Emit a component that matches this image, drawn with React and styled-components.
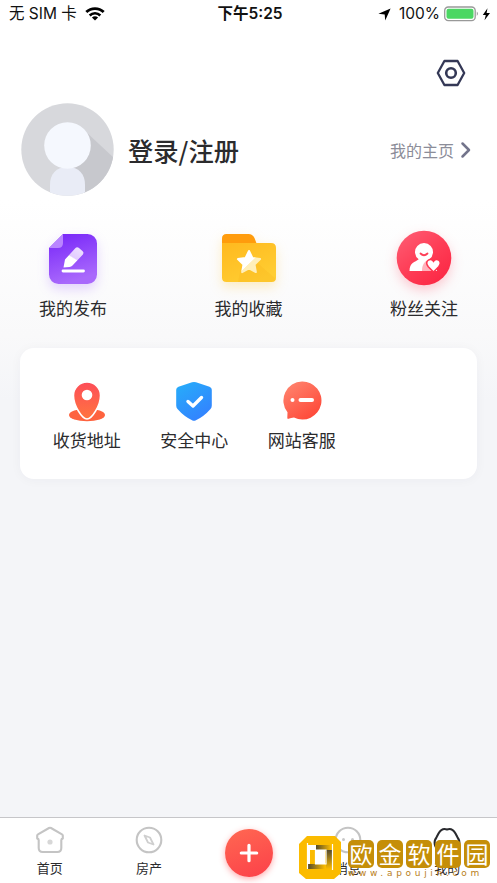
import styled, { createGlobalStyle } from "styled-components";

const shortcuts = [
  { label: "我的发布", icon: <PublishIcon /> },
  { label: "我的收藏", icon: <FavoriteIcon /> },
  { label: "粉丝关注", icon: <FansIcon /> },
];

const services = [
  { label: "收货地址", icon: <AddressIcon /> },
  { label: "安全中心", icon: <ShieldIcon /> },
  { label: "网站客服", icon: <SupportIcon /> },
];

export default function App() {
  return (
    <Page>
      <GlobalStyle />
      <StatusBar>
        <div className="left">
          <span>无 SIM 卡</span>
          <WifiIcon />
        </div>
        <div className="time">下午5:25</div>
        <div className="right">
          <LocationIcon />
          <span className="percent">100%</span>
          <BatteryIcon />
        </div>
      </StatusBar>
      <Toolbar>
        <SettingsIcon />
      </Toolbar>
      <Profile>
        <Avatar />
        <h1>登录/注册</h1>
        <HomeLink>
          我的主页
          <svg width="12" height="18" viewBox="0 0 12 18" fill="none">
            <path d="M2.5 2.5 9 9l-6.5 6.5" stroke="#73748b" strokeWidth="2.5" strokeLinecap="round" strokeLinejoin="round" />
          </svg>
        </HomeLink>
      </Profile>
      <Shortcuts>
        {shortcuts.map((item) => (
          <Shortcut key={item.label}>
            {item.icon}
            <span>{item.label}</span>
          </Shortcut>
        ))}
      </Shortcuts>
      <Card>
        {services.map((item) => (
          <Service key={item.label}>
            {item.icon}
            <span>{item.label}</span>
          </Service>
        ))}
      </Card>
      <TabBar>
        <Tab>
          <HomeIcon />
          <span>首页</span>
        </Tab>
        <Tab>
          <CompassIcon />
          <span>房产</span>
        </Tab>
        <Tab>
          <AddButton aria-label="发布">
            <svg width="20" height="20" viewBox="0 0 20 20">
              <path d="M10 2.3v15.4M2.3 10h15.4" stroke="#fff" strokeWidth="3.2" strokeLinecap="round" />
            </svg>
          </AddButton>
        </Tab>
        <Tab>
          <MessageIcon />
          <span>消息</span>
        </Tab>
        <Tab>
          <MineIcon />
          <span>我的</span>
        </Tab>
      </TabBar>
      <Watermark>
        <WatermarkLogo />
        <div>
          <Tiles>
            {["欧", "金", "软", "件", "园"].map((char) => (
              <Tile key={char}>{char}</Tile>
            ))}
          </Tiles>
          <Site>www.apoujin.com</Site>
        </div>
      </Watermark>
    </Page>
  );
}

function WifiIcon() {
  return (
    <svg width="20" height="14" viewBox="0 0 20 14" fill="none" stroke="#000">
      <path d="M1.3 5.1a12.4 12.4 0 0 1 17.4 0" strokeWidth="2.8" />
      <path d="M4.7 8.5a7.5 7.5 0 0 1 10.6 0" strokeWidth="2.6" />
      <path d="M10 13.4 6.9 10.6a4.7 4.7 0 0 1 6.2 0z" fill="#000" stroke="none" />
    </svg>
  );
}

function LocationIcon() {
  return (
    <svg width="13" height="13" viewBox="0 0 13 13">
      <path d="M12.6.4 7.2 12.5 6.7 6.4.4 5.8z" fill="#000" />
    </svg>
  );
}

function BatteryIcon() {
  return (
    <svg width="47" height="16" viewBox="0 0 47 16">
      <rect x=".7" y="1" width="30.5" height="13.6" rx="3.6" fill="#fff" stroke="#999" strokeWidth="1.3" />
      <rect x="2.5" y="2.8" width="27" height="10" rx="2" fill="#4bd763" />
      <path d="M32.8 5.6q2 2.2 0 4.4z" fill="#888" />
      <path d="M43.5 2.2 38.8 9h3l-1.3 5.2L46 7h-3.4z" fill="#000" />
    </svg>
  );
}

function SettingsIcon() {
  return (
    <svg width="30" height="28" viewBox="0 0 30 28" fill="none" stroke="#343856" strokeWidth="2.3" strokeLinejoin="round">
      <path d="M8.4 2h13.2L28.2 14l-6.6 12H8.4L1.8 14z" />
      <circle cx="15" cy="14" r="4.8" strokeWidth="2.6" />
    </svg>
  );
}

function Avatar() {
  return (
    <svg width="93" height="93" viewBox="0 0 93 93">
      <defs>
        <clipPath id="avatar">
          <circle cx="46.5" cy="46.5" r="46.2" />
        </clipPath>
      </defs>
      <g clipPath="url(#avatar)">
        <path d="M0 0h93v93H0z" fill="#d7d8dc" />
        <path d="M63 27 93 55v38H62L50 60z" fill="#c7c8cd" />
        <path d="M29 93V82c0-11 6-18 17.5-18S64 71 64 82v11z" fill="#e9ecf6" />
        <circle cx="46.5" cy="42.5" r="23.3" fill="#f5f8fe" />
      </g>
    </svg>
  );
}

function PublishIcon() {
  return (
    <IconShadow $color="rgba(143, 70, 255, .22)" width="60" height="60" viewBox="0 0 60 60">
      <defs>
        <linearGradient id="publish" x2=".3" y2="1">
          <stop stopColor="#7624f8" />
          <stop offset="1" stopColor="#a969fc" />
        </linearGradient>
        <linearGradient id="pen" x1=".2" y1="1" x2=".8" y2="0">
          <stop offset=".45" stopColor="#fff" />
          <stop offset=".5" stopColor="#e2ccff" />
          <stop offset="1" stopColor="#eee1ff" />
        </linearGradient>
      </defs>
      <path d="M20 5h24.5a9.5 9.5 0 0 1 9.5 9.5v31a9.5 9.5 0 0 1-9.5 9.5h-29A9.500 9.500 0 0 1 6 45.500V19z" fill="url(#publish)" />
      <path d="M20 5v9q0 5-5 5H6z" fill="#b985ff" />
      <path d="M20.500 38.500 22 30.500 32.500 19q1.500-1.500 3.200-.2l4 3.400q1.600 1.500.2 3.200L29.500 36.500q-1.200 1.300-3 1.500z" fill="url(#pen)" />
      <path d="M20 42h20.500" stroke="#fff" strokeWidth="2.800" strokeLinecap="round" />
    </IconShadow>
  );
}

function FavoriteIcon() {
  return (
    <IconShadow $color="rgba(255, 190, 30, .25)" width="60" height="60" viewBox="0 0 60 60">
      <defs>
        <linearGradient id="folder" x2=".6" y2="1">
          <stop stopColor="#ffb91f" />
          <stop offset="1" stopColor="#ffcd31" />
        </linearGradient>
        <linearGradient id="star" x2="1" y2="1">
          <stop offset=".54" stopColor="#fff" />
          <stop offset=".56" stopColor="#ffefba" />
        </linearGradient>
      </defs>
      <path d="M3 20V9.500Q3 5 7.500 5h22q4 0 6 4l3 8v8z" fill="#ff9c0c" />
      <path d="M3 14h49q5 0 5 5v29.500q0 4.500-4.500 4.500h-45Q3 53 3 48.500z" fill="url(#folder)" />
      <path d="m19 53 3-15 12-8 23 20q-1 3-4.500 3z" fill="#f8ad18" opacity=".22" />
      <path d="m30 22 3.400 7 7.700 1.100-5.600 5.400 1.400 7.600-6.900-3.700-6.900 3.700 1.400-7.600-5.600-5.400 7.700-1.100z" fill="url(#star)" stroke="url(#star)" strokeWidth="2" strokeLinejoin="round" />
    </IconShadow>
  );
}

function FansIcon() {
  return (
    <IconShadow $color="rgba(255, 57, 82, .25)" width="60" height="60" viewBox="0 0 60 60">
      <defs>
        <linearGradient id="fans" x1=".1" x2=".9" y2="1">
          <stop stopColor="#fe5c73" />
          <stop offset=".5" stopColor="#fe3d56" />
          <stop offset="1" stopColor="#fb2542" />
        </linearGradient>
      </defs>
      <circle cx="30" cy="29" r="27.300" fill="url(#fans)" />
      <path d="M15.500 42c0-8.500 5.500-8.500 9.200-11.700a9 9 0 1 1 10.600 0c4.700 3.200 7.700 4.700 7.700 11.700z" fill="#fff" />
      <path d="M32.500 31.500c-3.500 3-4.500 6-4.500 10.500h14z" fill="#ffb3bc" />
      <path d="M26.500 24.500q3.500 3.500 7 0" fill="none" stroke="#fe4058" strokeWidth="1.800" strokeLinecap="round" />
      <path d="m39.500 43-5.200-5.200c-4.400-5.600 2.300-10 5.200-5.400 2.900-4.600 9.600-.2 5.200 5.400z" fill="#fff" stroke="#fe344e" strokeWidth="1.500" />
    </IconShadow>
  );
}

function AddressIcon() {
  return (
    <svg width="40" height="44" viewBox="0 0 40 44">
      <defs>
        <linearGradient id="pin" x2="0" y2="1">
          <stop stopColor="#fd4d58" />
          <stop offset="1" stopColor="#ff753f" />
        </linearGradient>
      </defs>
      <ellipse cx="20" cy="35" rx="18" ry="6.200" fill="#fe633f" />
      <path d="M20 38.500C15 38.500 6.500 25 6.500 15a13.500 13.500 0 0 1 27 0c0 10-8.500 23.500-13.500 23.500z" transform="translate(0 .5)" fill="url(#pin)" stroke="#fff" strokeWidth="1.500" />
      <circle cx="20" cy="15" r="5.300" fill="#fff" />
    </svg>
  );
}

function ShieldIcon() {
  return (
    <svg width="40" height="44" viewBox="0 0 40 44">
      <defs>
        <linearGradient id="shield" x1=".2" x2=".8" y2="1">
          <stop stopColor="#27abfa" />
          <stop offset="1" stopColor="#347fff" />
        </linearGradient>
      </defs>
      <path d="M18 2.300q2-.8 4 0l13.500 4.500q2.300.8 2.300 3V25.500q0 2-1.300 3.500Q30 36.500 21.500 40.500q-1.500.7-3 0Q10 36.500 3.500 29q-1.300-1.500-1.300-3.500V9.800q0-2.200 2.300-3z" fill="url(#shield)" />
      <path d="m14 21.500 5 4.500 8.500-8.500" fill="none" stroke="#fff" strokeWidth="3.400" strokeLinecap="round" strokeLinejoin="round" />
    </svg>
  );
}

function SupportIcon() {
  return (
    <svg width="40" height="44" viewBox="0 0 40 44">
      <defs>
        <linearGradient id="support" x1=".1" x2=".8" y2="1">
          <stop stopColor="#ff8670" />
          <stop offset="1" stopColor="#fe4636" />
        </linearGradient>
      </defs>
      <path d="M20 1.500a19 19 0 1 1-8 36q-3 .2-5.500 1.300-1.200.5-1.200-1l.2-5.500A19 19 0 0 1 20 1.500z" fill="url(#support)" />
      <circle cx="10.500" cy="20" r="2" fill="#fff" />
      <path d="M18.500 20h11.500" stroke="#fff" strokeWidth="4" strokeLinecap="round" />
    </svg>
  );
}

function HomeIcon() {
  return (
    <TabIcon>
      <path d="M13 2Q14 1.500 15 2l11 6.300q1 .6.800 1.800v2.500q-1.400 0-1.500 1.500V22q0 4-4 4H6.700q-4 0-4-4v-7.900Q2.600 12.600 1.200 12.600v-2.500Q1 8.900 2 8.300z" />
      <circle cx="14" cy="16" r="2.600" fill="#d7d7d7" stroke="none" />
    </TabIcon>
  );
}

function CompassIcon() {
  return (
    <TabIcon>
      <circle cx="14" cy="14" r="12.300" />
      <path d="m9.500 9.500 5.500 2 3.500 7-5.500-2z" stroke="#cfcfcf" strokeWidth="1.800" />
    </TabIcon>
  );
}

function MessageIcon() {
  return (
    <TabIcon>
      <circle cx="14" cy="14" r="12.300" />
      <circle cx="9.500" cy="13.500" r="1.500" fill="#c7c7c7" stroke="none" />
      <circle cx="18.500" cy="13.500" r="1.500" fill="#c7c7c7" stroke="none" />
    </TabIcon>
  );
}

function MineIcon() {
  return (
    <TabIcon $active>
      <path d="M6 24.500C1 21 .5 15 3.500 11.300L5.500 7.500Q9 1.500 14 3.500q5-2 8.500 4l2 3.800C27.500 15 27 21 22 24.500z" />
      <path d="M8.500 18.500q5.500 4 11 0" />
    </TabIcon>
  );
}

function WatermarkLogo() {
  return (
    <svg width="42" height="43" viewBox="0 0 42 43">
      <defs>
        <linearGradient id="foldTop" x1="1" x2="0">
          <stop stopColor="#fbbb00" />
          <stop offset="1" stopColor="#554b2c" />
        </linearGradient>
        <linearGradient id="foldSide" x2="0" y2="1">
          <stop stopColor="#554b2c" />
          <stop offset="1" stopColor="#fbbb00" />
        </linearGradient>
      </defs>
      <path d="M8 0h28l6 6v31l-7 6H7l-7-6V8zM9 9v24h17V14h7V9z" fill="#fbbb00" fillRule="evenodd" />
      <path d="M9 9h24v5H17v19H9z" fill="#fff" />
      <path d="M17 9h16v5H17z" fill="#fbbb00" />
      <path d="M17 9h15v5H17z" fill="url(#foldTop)" />
      <path d="M27 14h6v19h-6z" fill="url(#foldSide)" />
      <path d="M9 28h17v5H9z" fill="url(#foldTop)" />
      <path d="M11 14h6v14h-6z" fill="#fbbb00" />
      <path d="M8.500 7v26M16.500 14v14H27V14zM33.500 8v26" fill="none" stroke="#fff" strokeWidth="1.200" />
    </svg>
  );
}

const GlobalStyle = createGlobalStyle`
  * {
    box-sizing: border-box;
  }
  body {
    margin: 0;
    font-family: "Noto Sans CJK SC", sans-serif;
    color: #2b2b2d;
  }
  svg {
    display: block;
    flex-shrink: 0;
  }
`;

const Page = styled.div`
  height: 883px;
  overflow: hidden;
  position: relative;
  display: flex;
  flex-direction: column;
  background: linear-gradient(#fff 200px, #f9f9fa 335px, #f4f5f8 400px);
`;

const StatusBar = styled.div`
  height: 28px;
  padding: 0 6px 0 9px;
  display: grid;
  grid-template-columns: 1fr auto 1fr;
  align-items: center;
  font-family: Inter, "Noto Sans CJK SC", sans-serif;
  font-size: 15.5px;
  line-height: 28px;
  color: #111;
  white-space: nowrap;
  .left,
  .right {
    display: flex;
    align-items: center;
  }
  .left {
    gap: 8px;
  }
  .right {
    justify-content: flex-end;
  }
  .time {
    font-weight: 600;
  }
  .percent {
    margin: 0 4px 0 8px;
  }
`;

const Toolbar = styled.div`
  height: 75px;
  padding: 31px 31px 0 0;
  display: flex;
  justify-content: flex-end;
`;

const Profile = styled.div`
  height: 93px;
  padding: 0 25px 0 21px;
  display: flex;
  align-items: center;
  h1 {
    margin: 0 0 0 14px;
    font-size: 25.3px;
    font-weight: 500;
  }
`;

const HomeLink = styled.div`
  margin-left: auto;
  display: flex;
  align-items: center;
  gap: 6px;
  font-size: 16px;
  color: #8c8d99;
`;

const Shortcuts = styled.div`
  height: 152px;
  padding: 33px 39px 0;
  display: flex;
  justify-content: space-between;
`;

const Shortcut = styled.div`
  width: 68px;
  display: flex;
  flex-direction: column;
  align-items: center;
  gap: 6px;
  font-size: 17px;
  line-height: 25px;
  white-space: nowrap;
`;

const IconShadow = styled.svg`
  overflow: visible;
  filter: drop-shadow(0 5px 6px ${({ $color }) => $color});
`;

const Card = styled.div`
  height: 131px;
  margin: 0 20px;
  padding: 32px 13px 0;
  display: flex;
  border-radius: 14px;
  background: #fff;
  box-shadow: 0 1px 12px rgba(40, 45, 70, 0.04);
`;

const Service = styled.div`
  width: 107.5px;
  display: flex;
  flex-direction: column;
  align-items: center;
  gap: 3px;
  font-size: 17px;
  line-height: 25px;
`;

const TabBar = styled.div`
  height: 66px;
  margin-top: auto;
  display: flex;
  background: #fff;
  border-top: 1px solid #c6c6c9;
`;

const Tab = styled.div`
  flex: 1;
  padding-top: 8px;
  display: flex;
  flex-direction: column;
  align-items: center;
  gap: 4px;
  font-size: 13px;
  line-height: 20px;
`;

const TabIcon = styled.svg.attrs({ viewBox: "0 0 28 28" })`
  width: 28px;
  height: 28px;
  fill: none;
  stroke: ${({ $active }) => ($active ? "#292a2e" : "#c4c4c4")};
  stroke-width: 2.1px;
  stroke-linecap: round;
  stroke-linejoin: round;
`;

const AddButton = styled.button`
  width: 48px;
  height: 48px;
  margin-top: 3px;
  padding: 0;
  border: none;
  border-radius: 50%;
  display: flex;
  align-items: center;
  justify-content: center;
  flex-shrink: 0;
  background: linear-gradient(160deg, #ff6852, #fc4049);
  box-shadow: 0 2px 6px rgba(255, 70, 75, 0.45);
`;

/* sits over the tab bar */
const Watermark = styled.div`
  position: absolute;
  left: 299px;
  bottom: 4px;
  display: flex;
  gap: 7px;
`;

const Tiles = styled.div`
  margin-top: 4px;
  display: flex;
  gap: 3px;
`;

const Tile = styled.div`
  width: 26px;
  height: 28px;
  border-radius: 5px;
  background: #c58e08;
  color: #fff;
  font-size: 23px;
  line-height: 27px;
  text-align: center;
`;

const Site = styled.div`
  font-family: "DejaVu Sans", sans-serif;
  font-size: 9px;
  line-height: 11px;
  letter-spacing: 3.7px;
  color: #b9801a;
  white-space: nowrap;
`;
